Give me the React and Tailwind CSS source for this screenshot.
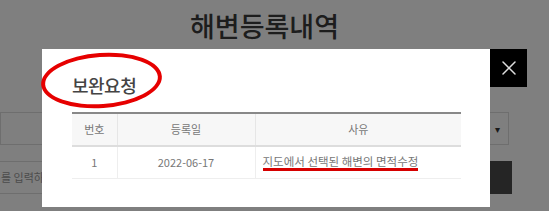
import { X } from "lucide-react";

const font = { fontFamily: '"Noto Sans CJK KR", "Noto Sans", sans-serif' };

export default function App() {
  return (
    <div className="relative h-[211px] w-[549px] overflow-hidden bg-white" style={font}>
      {/* page behind the modal */}
      <div className="flex flex-col">
        <h1 className="pt-[6px] pr-[20px] text-center text-[27px] font-medium leading-[40px] text-[#3a3a3a]">해변등록내역</h1>
        <div className="mt-[66px] flex h-[33px] pl-0 pr-[40px]">
          <div className="flex flex-1 items-center justify-end border border-[#ddd] pr-[8px]">
            <span className="text-[10px] leading-none text-[#333]">▾</span>
          </div>
        </div>
        <div className="mt-[16px] flex h-[33px] pr-[37px]">
          <div className="flex flex-1 items-center border-y border-[#ddd] text-[11px] text-[#999]">
            <span className="pl-[1px]">를 입력하세요</span>
          </div>
          <div className="w-[70px] bg-[#4a4a4a]" />
        </div>
      </div>

      {/* overlay */}
      <div className="absolute inset-0 bg-black/50" />

      {/* modal */}
      <div className="absolute left-[42px] top-[49px] flex h-[158px] w-[448px] flex-col bg-white pl-[30px] pr-[29px] pt-[24px]">
        <h2 className="text-[18px] font-medium leading-[24px] tracking-[-0.5px] text-[#444]">보완요청</h2>
        <table className="mt-[15px] w-full border-collapse border-t-2 border-[#888] text-[11px] text-[#777]">
          <thead>
            <tr className="h-[33px] border-b-2 border-[#ddd] bg-[#f7f7f7]">
              <th className="w-[45px] border-r border-[#e6e6e6] font-normal">번호</th>
              <th className="w-[138px] border-r border-[#e6e6e6] font-normal">등록일</th>
              <th className="font-normal">사유</th>
            </tr>
          </thead>
          <tbody>
            <tr className="h-[32px] border-b border-[#eee]">
              <td className="border-r border-[#eee] text-center">1</td>
              <td className="border-r border-[#eee] text-center">2022-06-17</td>
              <td className="pl-[7px]">
                <span className="inline-block border-b-[3px] border-[#d60000] text-[11.5px] leading-[13px]">
                  지도에서 선택된 해변의 면적수정
                </span>
              </td>
            </tr>
          </tbody>
        </table>
      </div>

      {/* annotation circle */}
      <div className="absolute left-[41px] top-[53px] h-[55px] w-[121px] -rotate-[4deg] rounded-[50%] border-4 border-[#e60000]" />

      {/* close button */}
      <button className="absolute left-[490px] top-[49px] flex h-[38px] w-[37px] items-center justify-center bg-black">
        <X className="h-[24px] w-[24px] text-[#ddd]" strokeWidth={1.5} />
      </button>
    </div>
  );
}
